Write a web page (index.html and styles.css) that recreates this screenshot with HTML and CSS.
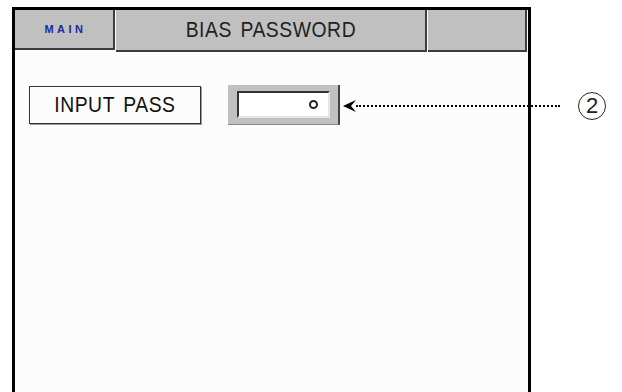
FILE: index.html
```html
<!DOCTYPE html>
<html lang="en">
<head>
  <meta charset="UTF-8">
  <title>Bias Password</title>
  <link rel="stylesheet" href="styles.css">
</head>
<body>
  <div class="page">
    <div class="screen">
      <div class="header">
        <div class="cell main">MAIN</div>
        <div class="cell title"><span class="narrow">BIAS PASSWORD</span></div>
        <div class="cell blank"></div>
      </div>

      <div class="row">
        <div class="label"><span class="narrow">INPUT PASS</span></div>
        <div class="field">
          <div class="field-inner"><span class="dot"></span></div>
        </div>
      </div>
    </div>

    <!-- callout pointing at the input field -->
    <div class="callout">
      <svg class="arrow-head" width="13" height="12" viewBox="0 0 13 12">
        <path d="M0 6 L13 0 L8 6 L13 12 Z" fill="#000"/>
      </svg>
      <div class="dots"></div>
      <span class="num">2</span>
    </div>
  </div>
</body>
</html>
```

FILE: styles.css
```css
body { margin: 0; background: #fff; font-family: "Liberation Sans", Arial, sans-serif; }
.page { position: relative; padding: 7px 0 0 12px; height: 385px; overflow: hidden; }

.screen { width: 513px; height: 400px; background: #fcfcfc; border: 3px solid #000; border-bottom: none; }

.header { display: flex; height: 43px; }
.cell { height: 40px; background: #c0c0c0; border-right: 2px solid #3c3c3c; border-bottom: 2px solid #3c3c3c; margin-right: 1px; display: flex; align-items: center; justify-content: center; color: #222; }
.main { color: #1b2a9c; font-size: 11px; font-weight: bold; letter-spacing: 3.5px; padding-left: 3px; box-sizing: border-box; width: 100px; }
.title { width: 309px; font-size: 22px; }
.blank { flex: 1; }

.narrow { display: inline-block; transform: scaleX(0.88); letter-spacing: 0.6px; word-spacing: 3px; }

.row { display: flex; align-items: center; padding: 32px 0 0 14px; gap: 27px; }
.label { width: 170px; height: 36px; border: 1px solid #333; display: flex; align-items: center; justify-content: center; font-size: 22px; color: #111; box-shadow: 1px 1px 0 #999; }

.field { background: #c0c0c0; border-right: 2px solid #444; border-bottom: 1px solid #888; padding: 6px 0 0 9px; box-sizing: border-box; height: 40px; width: 112px; }
.field-inner { width: 79px; height: 23px; background: #fff; border-top: 2px solid #333; border-left: 2px solid #333; border-right: 2px solid #e6e6e6; border-bottom: 2px solid #e6e6e6; display: flex; align-items: center; justify-content: flex-end; padding-right: 10px; }
.dot { width: 5px; height: 5px; border: 2px solid #222; border-radius: 50%; }

.callout { position: absolute; left: 343px; top: 92px; display: flex; align-items: center; height: 27px; }
.arrow-head { display: block; }
.dots { width: 204px; border-top: 2px dotted #000; }
.num { margin-left: 18px; width: 26px; height: 26px; border: 1px solid #222; border-radius: 50%; display: flex; align-items: center; justify-content: center; font-size: 22px; color: #222; }
```
